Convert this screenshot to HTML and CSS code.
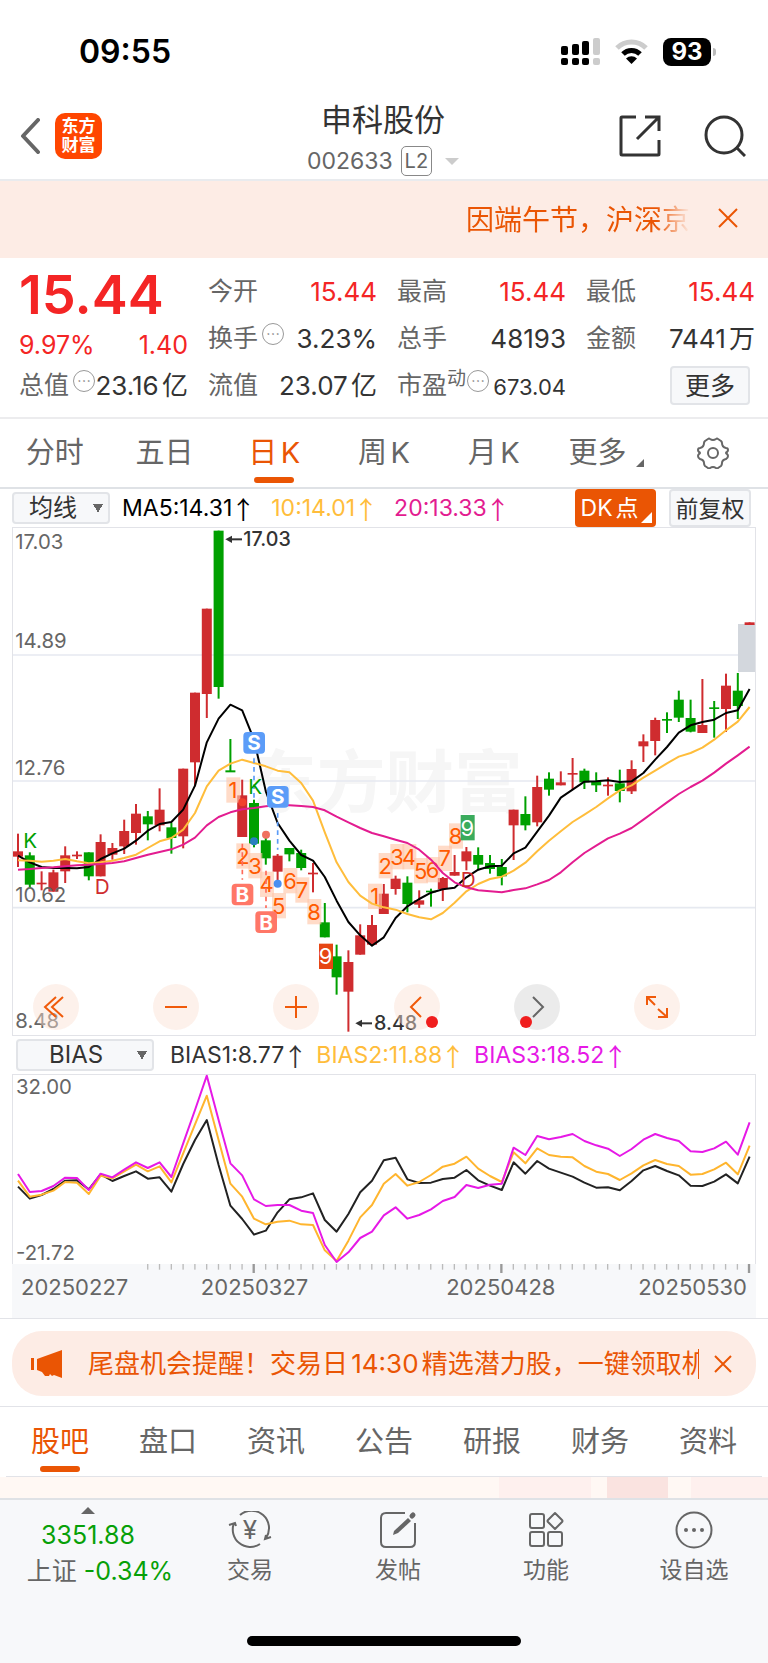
FILE: index.html
```html
<!DOCTYPE html>
<html lang="zh-CN">
<head>
    <meta charset="UTF-8">
    <title>申科股份 002633</title>
    <meta name="viewport" content="width=device-width, initial-scale=1">
    <link rel="stylesheet" href="styles.css">
</head>
<body>
    <div class="status-bar">
        <span class="clock">09:55</span>
        <div class="status-icons">
            <svg width="39" height="28" viewBox="0 0 39 28">
                <rect x="0" y="8" width="7" height="9" rx="2"/>
                <rect x="11" y="6" width="7" height="11" rx="2"/>
                <rect x="21" y="3" width="7" height="14" rx="2"/>
                <rect x="32" y="0" width="7" height="17" rx="2" fill="#ccc"/>
                <rect x="0" y="20" width="7" height="7" rx="2"/>
                <rect x="11" y="20" width="7" height="7" rx="2"/>
                <rect x="21" y="20" width="7" height="7" rx="2"/>
                <rect x="32" y="20" width="7" height="7" rx="2" fill="#ccc"/>
            </svg>
            <svg width="33" height="25" viewBox="0 0 33 25">
                <path d="M2 9a20.500 20.500 0 0 1 29 0" fill="none" stroke="#ccc" stroke-width="5"/>
                <path d="M8 15a12 12 0 0 1 17 0" fill="none" stroke="#000" stroke-width="5"/>
                <path d="M11 19.500a8 8 0 0 1 11 0L16.500 25z"/>
            </svg>
            <span class="battery">93</span>
        </div>
    </div>

    <header class="header">
        <div class="header-left">
            <button class="icon-button" aria-label="返回">
                <svg width="20" height="36" viewBox="0 0 20 36"><path d="M18 2 3 18l15 16" fill="none" stroke="#666" stroke-width="4" stroke-linecap="round" stroke-linejoin="round"/></svg>
            </button>
            <span class="logo">东方<br>财富</span>
        </div>
        <div class="header-title">
            <h1>申科股份</h1>
            <div class="stock-code">002633 <span class="level">L2</span> <i class="caret"></i></div>
        </div>
        <div class="header-right">
            <button class="icon-button" aria-label="分享">
                <svg width="42" height="42" viewBox="0 0 42 42" fill="none" stroke="#333" stroke-width="3"><path d="M17 2H3q-1 0-1 1v36q0 1 1 1h36q1 0 1-1V25M18 24 39 3M26 2h14v14"/></svg>
            </button>
            <button class="icon-button" aria-label="搜索">
                <svg width="42" height="42" viewBox="0 0 42 42" fill="none" stroke="#333" stroke-width="3"><circle cx="20" cy="20" r="18"/><path d="m32 32 9 9"/></svg>
            </button>
        </div>
    </header>

    <div class="notice">
        <p class="notice-text">因端午节，沪深京</p>
        <button class="icon-button close" aria-label="关闭">
            <svg width="20" height="20" viewBox="0 0 20 20"><path d="m1 1 18 18M19 1 1 19" stroke="#ea5504" stroke-width="2"/></svg>
        </button>
    </div>

    <section class="quote">
        <div class="quote-col">
            <div class="price">15.44</div>
            <div class="change"><span>9.97%</span><span>1.40</span></div>
            <div class="cell"><span>总值<i class="info">⋯</i></span><b>23.16亿</b></div>
        </div>
        <div class="quote-col">
            <div class="cell"><span>今开</span><b class="up">15.44</b></div>
            <div class="cell"><span>换手<i class="info">⋯</i></span><b>3.23%</b></div>
            <div class="cell"><span>流值</span><b>23.07亿</b></div>
        </div>
        <div class="quote-col">
            <div class="cell"><span>最高</span><b class="up">15.44</b></div>
            <div class="cell"><span>总手</span><b>48193</b></div>
            <div class="cell"><span>市盈<sup>动</sup><i class="info">⋯</i></span><b class="small">673.04</b></div>
        </div>
        <div class="quote-col">
            <div class="cell"><span>最低</span><b class="up">15.44</b></div>
            <div class="cell"><span>金额</span><b>7441万</b></div>
            <div class="cell cell-end"><button class="more">更多</button></div>
        </div>
    </section>

    <nav class="period-tabs">
        <a href="#">分时</a>
        <a href="#">五日</a>
        <a href="#" class="active">日K</a>
        <a href="#">周K</a>
        <a href="#">月K</a>
        <a href="#" class="with-corner">更多</a>
        <button class="icon-button" aria-label="设置">
            <svg width="32" height="32" viewBox="0 0 32 32" fill="none" stroke="#666" stroke-width="2">
                <circle cx="16" cy="16" r="5"/>
                <path stroke-linejoin="round" d="M11 2q1-1 2 0q3 2 6 0q1-1 2 0l3 2q1 1 1 2q0 4 4 5q2 0 2 2q0 1-1 2q-2 1 0 2q1 1 1 2q0 2-2 3q-4 1-4 4q0 2-1 3l-3 2q-1 1-2 0q-3-2-6 0q-1 1-2 0l-3-2q-1-1-1-3q0-3-4-4q-2-1-2-3q0-1 1-2q2-1 0-2q-1-1-1-2q0-2 2-2q4-1 4-5q0-1 1-2z"/>
            </svg>
        </button>
    </nav>

    <div class="indicator-row">
        <select class="picker" aria-label="主图指标"><option>均线</option></select>
        <span class="legend">MA5:14.31<i>↑</i></span>
        <span class="legend yellow">10:14.01<i>↑</i></span>
        <span class="legend pink">20:13.33<i>↑</i></span>
        <button class="dk">DK点</button>
        <button class="adjust">前复权</button>
    </div>

    <div class="main-chart">
        <svg id="candles" viewBox="36 22 2232 1527"></svg>
        <div class="chart-tools">
            <button class="tool" aria-label="最左"><svg viewBox="0 0 46 46"><path d="M23 13 12 23l11 10M30 13 19 23l11 10"/></svg></button>
            <button class="tool" aria-label="缩小"><svg viewBox="0 0 46 46"><path d="M12 23h22"/></svg></button>
            <button class="tool" aria-label="放大"><svg viewBox="0 0 46 46"><path d="M12 23h22M23 12v22"/></svg></button>
            <button class="tool dot-right" aria-label="左移"><svg viewBox="0 0 46 46"><path d="M27 13 17 23l10 10"/></svg></button>
            <button class="tool gray dot-left" aria-label="右移"><svg viewBox="0 0 46 46"><path d="m19 13 10 10-10 10"/></svg></button>
            <button class="tool" aria-label="全屏"><svg viewBox="0 0 46 46"><path d="m13 13 8 8M13 21v-8h9M24 25l9 8M33 24v9h-9"/></svg></button>
        </div>
    </div>

    <div class="indicator-row bias-row">
        <select class="picker wide" aria-label="副图指标"><option>BIAS</option></select>
        <span class="legend dark">BIAS1:8.77<i>↑</i></span>
        <span class="legend yellow">BIAS2:11.88<i>↑</i></span>
        <span class="legend purple">BIAS3:18.52<i>↑</i></span>
    </div>

    <div class="bias-chart">
        <svg id="bias" viewBox="36 132 2232 570"></svg>
    </div>
    <div class="dates">
        <svg id="ticks" viewBox="36 702 2232 28"></svg>
        <div class="date-labels">
            <span>20250227</span>
            <span>20250327</span>
            <span>20250428</span>
            <span>20250530</span>
        </div>
    </div>

    <div class="promo-wrap">
        <div class="promo">
            <svg width="32" height="28" viewBox="0 0 32 28" fill="#ea5504"><path d="M0 8h3v12H0zM6 9 31 0v28l-8-3-2 1-2-2-1 2h-4l-3-4-5-2z"/></svg>
            <p>尾盘机会提醒！交易日14:30精选潜力股，一键领取机</p>
            <button class="icon-button" aria-label="关闭">
                <svg width="18" height="18" viewBox="0 0 18 18"><path d="m1 1 16 16M17 1 1 17" stroke="#ea5504" stroke-width="2"/></svg>
            </button>
        </div>
    </div>

    <nav class="info-tabs">
        <a href="#" class="active">股吧</a>
        <a href="#">盘口</a>
        <a href="#">资讯</a>
        <a href="#">公告</a>
        <a href="#">研报</a>
        <a href="#">财务</a>
        <a href="#">资料</a>
    </nav>
    <div class="feed-strip"></div>

    <footer class="bottom-bar">
        <div class="bottom-items">
            <a href="#" class="index-item">
                <i class="caret-up"></i>
                <span class="down">3351.88</span>
                <span class="index-name">上证<em class="down">-0.34%</em></span>
            </a>
            <a href="#">
                <svg width="44" height="38" viewBox="0 0 44 38" fill="none" stroke="#666" stroke-width="2">
                    <path d="M12 4a17.500 17.500 0 0 1 26 23M32 33A17.500 17.500 0 0 1 6 12M1 14l6-2 1 3M43 26l-6 2 1-4"/>
                    <text x="22" y="28" text-anchor="middle" font-size="26" fill="#666" stroke="none">¥</text>
                </svg>
                <span>交易</span>
            </a>
            <a href="#">
                <svg width="38" height="38" viewBox="0 0 38 38" fill="none" stroke="#666" stroke-width="2">
                    <path d="M26 2H7q-5 0-5 5v24q0 5 5 5h24q5 0 5-5V12"/>
                    <path d="m14 24 1-4L29 7l3 3-13 12z" fill="#666" stroke="none"/>
                    <path d="m33 5 1-1" stroke-width="5" stroke-linecap="round"/>
                </svg>
                <span>发帖</span>
            </a>
            <a href="#">
                <svg width="36" height="36" viewBox="0 0 36 36" fill="none" stroke="#666" stroke-width="2">
                    <rect x="2" y="2" width="14" height="14" rx="2"/>
                    <rect x="2" y="20" width="14" height="14" rx="2"/>
                    <rect x="20" y="20" width="14" height="14" rx="2"/>
                    <path d="m27 1 7 7q1 1 0 2l-7 7-7-7q-1-1 0-2z" stroke-linejoin="round"/>
                </svg>
                <span>功能</span>
            </a>
            <a href="#">
                <svg width="38" height="38" viewBox="0 0 38 38" fill="#666">
                    <circle cx="19" cy="19" r="17.500" fill="none" stroke="#666" stroke-width="2"/>
                    <circle cx="11" cy="19" r="2"/><circle cx="19" cy="19" r="2"/><circle cx="27" cy="19" r="2"/>
                </svg>
                <span>设自选</span>
            </a>
        </div>
        <div class="home-bar"></div>
    </footer>

    <script src="chart.js"></script>
</body>
</html>
```
FILE: styles.css
```css
* {
    box-sizing: border-box;
}

body {
    margin: 0;
    background-color: #fff;
    color: #333;
    font-family: Inter, "Noto Sans CJK SC", sans-serif;
    font-size: 25px;
    text-autospace: normal;
}

h1, p {
    margin: 0;
    font-weight: 400;
}

a {
    color: #666;
    text-decoration: none;
}

i, em, b {
    font-style: normal;
    font-weight: 400;
}

svg {
    display: block;
}

button, select {
    font-family: inherit;
    color: #333;
    cursor: pointer;
    text-autospace: normal;
}

.icon-button {
    padding: 0;
    border: none;
    background: none;
}

.up {
    color: #f42525;
}

.down {
    color: #07a007;
}

/* status bar */
.status-bar {
    display: flex;
    justify-content: space-between;
    align-items: center;
    height: 95px;
    padding: 8px 57px 0 79px;
}

.clock {
    color: #000;
    font-size: 32px;
    font-weight: 600;
}

.status-icons {
    display: flex;
    align-items: center;
    gap: 15px;
}

.battery {
    position: relative;
    width: 48px;
    border-radius: 8px;
    background-color: #000;
    color: #fff;
    font-size: 24px;
    font-weight: 700;
    line-height: 28px;
    text-align: center;
}

.battery::after {
    content: "";
    position: absolute;
    left: 50px;
    top: 10px;
    width: 3px;
    height: 8px;
    border-radius: 0 3px 3px 0;
    background-color: #bbb;
}

/* header */
.header {
    display: grid;
    grid-template-columns: 1fr auto 1fr;
    align-items: center;
    height: 86px;
    padding: 0 22px 2px 20px;
    border-bottom: 2px solid #e9ebee;
}

.header-left {
    display: flex;
    align-items: center;
    gap: 15px;
}

.logo {
    width: 47px;
    padding: 4px 0;
    border-radius: 10px;
    background-color: #ff4600;
    color: #fff;
    font-size: 17px;
    font-weight: 700;
    line-height: 19px;
    text-align: center;
}

.header-title {
    margin: 4px 0 -4px;
    text-align: center;
}

.header-title h1 {
    font-size: 31px;
    line-height: 42px;
}

.stock-code {
    display: flex;
    align-items: center;
    gap: 8px;
    color: #666;
    font-size: 23px;
    line-height: 40px;
}

.level {
    padding: 0 3px;
    border: 1px solid #888;
    border-radius: 5px;
    font-size: 20px;
    line-height: 28px;
}

.caret {
    margin-left: 5px;
    border: 7px solid transparent;
    border-top-color: #ccc;
    border-bottom: none;
}

.header-right {
    display: flex;
    justify-content: flex-end;
    gap: 43px;
}

/* notice */
.notice {
    display: flex;
    justify-content: flex-end;
    align-items: center;
    gap: 28px;
    height: 77px;
    padding: 0 30px 3px 0;
    background-color: #fdece5;
}

.notice-text {
    color: #ea5504;
    font-size: 28px;
    -webkit-mask-image: linear-gradient(to right, #000 85%, transparent);
    mask-image: linear-gradient(to right, #000 85%, transparent);
}

/* quote */
.quote {
    display: grid;
    grid-template-columns: repeat(4, minmax(0, 1fr));
    gap: 20px;
    height: 161px;
    padding: 10px 13px 8px 19px;
    border-bottom: 2px solid #ececee;
}

.cell {
    display: flex;
    justify-content: space-between;
    height: 47px;
    line-height: 47px;
    white-space: nowrap;
}

.cell span {
    color: #666;
}

.cell b {
    font-size: 26px;
}

.cell sup {
    font-size: 19px;
    line-height: 19px;
}

.cell .small {
    font-size: 22px;
    line-height: 51px;
}

.cell-end {
    justify-content: flex-end;
    align-items: center;
    padding-right: 5px;
}

.info {
    display: inline-block;
    width: 22px;
    height: 22px;
    margin-left: 4px;
    border: 1px solid #999;
    border-radius: 50%;
    color: #888;
    font-size: 14px;
    line-height: 20px;
    text-align: center;
    vertical-align: 8px;
}

sup + .info {
    margin-left: 1px;
}

.price {
    height: 54px;
    color: #f42525;
    font-size: 54px;
    font-weight: 600;
    line-height: 54px;
}

.change {
    display: flex;
    justify-content: space-between;
    height: 40px;
    color: #f42525;
    line-height: 46px;
}

.more {
    width: 80px;
    height: 39px;
    padding: 0;
    border: 2px solid #e2e4e8;
    border-radius: 4px;
    background-color: #f7f8fa;
    font-size: 25px;
    line-height: 34px;
}

/* period tabs */
.period-tabs {
    display: flex;
    align-items: center;
    height: 70px;
    border-bottom: 2px solid #dfe2e6;
    font-size: 29px;
    line-height: 68px;
}

.period-tabs a,
.period-tabs button,
.info-tabs a {
    position: relative;
    flex: 1;
    text-align: center;
}

.period-tabs svg {
    margin: 0 auto;
}

.period-tabs .active,
.info-tabs .active {
    color: #ea5504;
}

.period-tabs .active::after,
.info-tabs .active::after {
    content: "";
    position: absolute;
    left: 50%;
    bottom: 4px;
    width: 40px;
    height: 6px;
    margin-left: -20px;
    border-radius: 3px;
    background-color: #ea5504;
}

.with-corner {
    text-indent: -12px;
}

.with-corner::after {
    content: "";
    position: absolute;
    right: 14px;
    bottom: 20px;
    border-left: 8px solid transparent;
    border-bottom: 8px solid #666;
}

/* indicators */
.indicator-row {
    display: flex;
    align-items: center;
    height: 38px;
    padding: 0 17px 0 12px;
    font-size: 23px;
    white-space: nowrap;
}

.picker {
    width: 98px;
    height: 32px;
    margin-right: 12px;
    padding: 0 28px 0 15px;
    border: 2px solid #e2e4e8;
    border-radius: 4px;
    appearance: none;
    background: #f7f8fa conic-gradient(from 331deg at 50% 100%, #666 58deg, transparent 0) no-repeat right 5px center / 10px 9px;
    font-size: 24px;
    line-height: 26px;
}

.wide {
    width: 138px;
    margin-right: 16px;
    padding-left: 31px;
}

.legend {
    display: flex;
    align-items: center;
    margin-right: 20px;
    color: #000;
}

.legend i {
    display: flex;
    justify-content: center;
    width: 16px;
    margin-left: 3px;
    font-family: "Noto Sans CJK SC", sans-serif;
    font-size: 25px;
    line-height: 26px;
}

.bias-row .legend {
    margin-right: 13px;
}

.legend.dark {
    color: #333;
}

.legend.yellow {
    color: #ffbd3b;
}

.legend.pink {
    color: #e31c90;
}

.legend.purple {
    color: #e619e6;
}

.dk,
.adjust {
    height: 38px;
    padding: 0;
    border: none;
    border-radius: 4px;
    font-size: 23px;
    line-height: 36px;
}

.dk {
    position: relative;
    width: 81px;
    margin-left: auto;
    padding-right: 12px;
    background-color: #ea5504;
    color: #fff;
}

.dk::after {
    content: "";
    position: absolute;
    right: 4px;
    bottom: 4px;
    border-left: 11px solid transparent;
    border-bottom: 11px solid #fff;
}

.adjust {
    width: 82px;
    margin-left: 13px;
    border: 2px solid #e2e4e8;
    background-color: #f7f8fa;
}

/* charts */
.main-chart {
    position: relative;
    margin: 0 12px;
    outline: 1px solid #e2e3e8;
    outline-offset: -1px;
}

.chart-tools {
    position: absolute;
    left: 21px;
    right: 76px;
    bottom: 6px;
    display: flex;
    justify-content: space-between;
}

.tool {
    position: relative;
    width: 46px;
    height: 46px;
    padding: 0;
    border: none;
    border-radius: 50%;
    background-color: rgba(251, 224, 211, 0.45);
}

.tool path {
    fill: none;
    stroke: #f05a0a;
    stroke-width: 2;
}

.gray {
    background-color: rgba(0, 0, 0, 0.08);
}

.gray path {
    stroke: #666;
}

.dot-right::after,
.dot-left::after {
    content: "";
    position: absolute;
    bottom: 2px;
    width: 12px;
    height: 12px;
    border-radius: 50%;
    background-color: #f01e1e;
}

.dot-right::after {
    right: 2px;
}

.dot-left::after {
    left: 6px;
}

.bias-row {
    padding-left: 16px;
}

.bias-chart {
    margin: 0 12px;
    box-shadow: inset 1px 1px #e2e3e8, inset -1px 0 #e2e3e8;
}

.dates {
    height: 54px;
    margin: 0 12px;
    background-color: #f7f8fa;
}

.date-labels {
    display: flex;
    padding: 0 9px;
    color: #666;
    font-size: 22px;
    line-height: 28px;
}

.date-labels span:nth-child(2) {
    margin-left: 10%;
}

.date-labels span:nth-child(3) {
    margin-left: 19%;
}

.date-labels span:nth-child(4) {
    margin-left: auto;
}

/* promo */
.promo-wrap {
    padding: 12px 12px 10px;
    border-top: 1px solid #e2e3e8;
    border-bottom: 1px solid #e2e3e8;
}

.promo {
    display: flex;
    align-items: center;
    height: 65px;
    padding: 0 24px 0 19px;
    border-radius: 30px;
    background-color: #fdece5;
}

.promo p {
    flex: 1;
    margin: 0 15px 0 25px;
    border-right: 1px solid #ea5504;
    overflow: hidden;
    color: #ea5504;
    font-size: 26px;
    line-height: 30px;
    white-space: nowrap;
}

/* info tabs */
.info-tabs {
    display: flex;
    margin: 0 6px;
    border-bottom: 1px solid #e2e3e8;
    font-size: 29px;
    line-height: 69px;
}

.feed-strip {
    height: 21px;
    background: linear-gradient(to right, #fff8f4 65%, #fef0ee 65% 77%, #fff8f4 77% 79%, #fae3e0 79% 87%, #fff8f4 87% 90%, #fef0ee 90%);
}

/* bottom bar */
.bottom-bar {
    padding-bottom: 18px;
    border-top: 2px solid #dfe2e6;
    background-color: #f7f8fa;
}

.bottom-items {
    display: flex;
    height: 136px;
}

.bottom-items a {
    display: flex;
    flex: 1;
    flex-direction: column;
    align-items: center;
    padding-top: 11px;
    font-size: 23px;
    line-height: 32px;
}

.bottom-items svg {
    height: 38px;
    margin-bottom: 5px;
}

.bottom-items .index-item {
    flex: 0 0 176px;
    padding-top: 7px;
    font-size: 25px;
}

.index-item span {
    margin-top: 7px;
    line-height: 29px;
    white-space: nowrap;
}

.index-item .index-name {
    margin-left: 24px;
}

.index-item em {
    margin-left: 7px;
}

.caret-up {
    border: 7px solid transparent;
    border-bottom-color: #666;
    border-top: none;
}

.home-bar {
    width: 274px;
    height: 10px;
    margin: 0 auto;
    border-radius: 5px;
    background-color: #000;
}

/* chart drawing */
#candles text,
#bias text {
    font-size: 61px;
    fill: #666;
}

.grid-line {
    stroke: #e6e9f0;
    stroke-width: 5;
}

.line {
    fill: none;
    stroke-width: 6;
    stroke-linejoin: round;
}

#candles .watermark {
    font-size: 206px;
    font-weight: 700;
    fill: #f6f6f6;
}

#candles .count {
    font-size: 66px;
    fill: #ff5a00;
    text-anchor: middle;
}

#candles .count.on {
    fill: #fff;
}

#candles .badge {
    font-size: 62px;
    font-weight: 700;
    fill: #fff;
    text-anchor: middle;
}

#candles .green {
    font-size: 62px;
    fill: #00a000;
}

#candles .red {
    font-size: 62px;
    fill: #cf2c2f;
}

#candles .peak {
    fill: #333;
    font-weight: 500;
    font-size: 59px;
}
```
FILE: chart.js
```js
const RED = "#cf2c2f";
const GREEN = "#00a000";
const STEP = 35.4;
const X0 = 54;

// [up, wickTop, wickBottom, bodyTop, bodyBottom]
const candles = [
    [1, 942, 1042, 995, 1011], [0, 998, 1105, 1007, 1095], [1, 1055, 1112, 1089, 1093],
    [1, 1050, 1116, 1058, 1116], [1, 980, 1090, 1007, 1055], [1, 995, 1018, 1005, 1009],
    [0, 998, 1082, 998, 1070], [1, 944, 1070, 967, 1070], [1, 970, 1020, 985, 1005],
    [1, 900, 1003, 934, 980], [1, 853, 975, 882, 940], [0, 874, 962, 890, 914],
    [1, 806, 935, 870, 917], [0, 910, 1002, 923, 955], [1, 747, 986, 747, 950],
    [1, 519, 800, 519, 728], [1, 267, 595, 267, 523], [0, 33, 537, 33, 502],
    [0, 658, 755, 752, 758], [1, 780, 952, 827, 952], [0, 840, 983, 850, 972],
    [0, 945, 1035, 962, 1016], [1, 1003, 1085, 1008, 1056], [0, 985, 1025, 985, 1004],
    [0, 990, 1052, 1000, 1045], [1, 1030, 1118, 1059, 1063], [0, 1150, 1253, 1208, 1253],
    [0, 1275, 1425, 1310, 1373], [1, 1292, 1536, 1327, 1416], [1, 1214, 1305, 1247, 1305],
    [1, 1186, 1277, 1216, 1275], [1, 1093, 1183, 1122, 1183], [1, 1068, 1125, 1077, 1108],
    [0, 1070, 1178, 1089, 1153], [1, 1112, 1165, 1142, 1155], [0, 1107, 1161, 1113, 1117],
    [1, 1072, 1144, 1075, 1108], [1, 1006, 1068, 1057, 1068], [1, 982, 1052, 995, 1025],
    [0, 983, 1052, 1006, 1035], [0, 1006, 1062, 1030, 1048], [0, 1018, 1097, 1042, 1070],
    [1, 870, 1021, 870, 917], [0, 830, 932, 883, 917], [1, 768, 920, 802, 908],
    [0, 758, 828, 777, 810], [1, 755, 797, 788, 797], [1, 715, 810, 760, 764],
    [0, 747, 808, 753, 788], [0, 758, 817, 785, 797], [1, 773, 828, 795, 799],
    [0, 750, 848, 791, 814], [1, 722, 823, 748, 815], [1, 644, 727, 665, 680],
    [1, 594, 707, 601, 664], [0, 578, 640, 598, 603], [0, 513, 607, 540, 594],
    [0, 540, 638, 595, 636], [1, 478, 640, 616, 640], [0, 544, 654, 563, 568],
    [1, 462, 637, 498, 568], [0, 460, 598, 513, 559], [1, 308, 316, 308, 316]
];

const ma5 = [1008, 1028, 1042, 1045, 1045, 1046, 1042, 1018, 1001, 987, 963, 933, 913, 907, 870, 798, 668, 597, 555, 572, 660, 815, 910, 963, 1006, 1023, 1072, 1143, 1207, 1247, 1278, 1253, 1195, 1160, 1138, 1119, 1109, 1104, 1073, 1050, 1040, 1038, 1001, 984, 936, 888, 834, 810, 786, 785, 782, 787, 785, 760, 720, 682, 639, 617, 607, 600, 580, 572, 508];
const ma10 = [1022, 1023, 1026, 1023, 1018, 1025, 1031, 1028, 1023, 1015, 1005, 985, 965, 955, 930, 880, 800, 753, 732, 720, 730, 740, 753, 758, 790, 843, 938, 1028, 1087, 1128, 1152, 1163, 1170, 1183, 1193, 1199, 1180, 1149, 1115, 1093, 1078, 1071, 1053, 1029, 995, 963, 935, 907, 885, 862, 836, 812, 797, 774, 753, 731, 711, 700, 684, 660, 632, 606, 562];
const ma20 = [1050, 1048, 1045, 1043, 1040, 1037, 1035, 1033, 1030, 1025, 1015, 1005, 997, 989, 975, 954, 917, 892, 878, 869, 865, 860, 857, 857, 859, 862, 872, 891, 908, 925, 940, 950, 960, 970, 990, 1020, 1060, 1088, 1103, 1112, 1115, 1118, 1111, 1106, 1094, 1081, 1058, 1028, 1000, 978, 956, 942, 925, 900, 874, 848, 823, 802, 783, 759, 732, 707, 681];

const bias1 = [470, 506, 495, 477, 452, 451, 478, 433, 453, 438, 424, 446, 442, 485, 402, 330, 270, 405, 527, 567, 614, 602, 547, 508, 502, 490, 570, 605, 552, 487, 452, 391, 383, 448, 459, 458, 447, 443, 420, 451, 467, 480, 397, 431, 393, 416, 428, 440, 458, 473, 472, 481, 453, 421, 408, 423, 436, 467, 468, 455, 433, 460, 380];
const bias2 = [452, 500, 494, 482, 456, 458, 492, 437, 445, 424, 404, 424, 409, 457, 370, 283, 197, 330, 461, 500, 566, 583, 575, 572, 583, 585, 661, 693, 632, 562, 525, 461, 432, 467, 456, 435, 410, 401, 380, 416, 438, 456, 367, 400, 355, 375, 380, 382, 408, 425, 432, 450, 430, 406, 390, 402, 408, 434, 432, 418, 398, 433, 347];
const bias3 = [432, 486, 483, 468, 443, 444, 480, 431, 442, 419, 397, 414, 397, 441, 340, 240, 137, 270, 400, 436, 508, 528, 525, 525, 542, 549, 645, 696, 667, 624, 605, 556, 532, 566, 555, 538, 513, 501, 465, 474, 464, 461, 353, 375, 318, 328, 321, 312, 333, 346, 356, 378, 357, 329, 312, 324, 333, 364, 366, 355, 335, 374, 277];

// [text, x, y, background]
const counts = [
    ["1", 679, 773], ["2", 709, 971], ["3", 745, 1000], ["4", 780, 1056], ["5", 816, 1120],
    ["6", 850, 1045], ["7", 886, 1073], ["8", 922, 1138], ["9", 957, 1272, "#e64614"],
    ["1", 1104, 1092], ["2", 1136, 1000], ["3", 1171, 973], ["4", 1207, 973], ["5", 1242, 1015],
    ["6", 1278, 1012], ["7", 1314, 978], ["8", 1347, 911], ["9", 1382, 886, "#3aab5c"]
];

function x(i) {
    return X0 + i * STEP;
}

function rect(left, top, width, height, fill, rx = 0) {
    return `<rect x="${left}" y="${top}" width="${width}" height="${height}" fill="${fill}" rx="${rx}"/>`;
}

function line(values, color) {
    const points = values.map((v, i) => `${x(i).toFixed(1)},${v}`).join(" ");
    return `<polyline class="line" points="${points}" stroke="${color}"/>`;
}

function text(left, top, value, cls = "") {
    return `<text x="${left}" y="${top}" class="${cls}">${value}</text>`;
}

function dash(left, top, bottom, color) {
    return `<path d="M${left} ${top}V${bottom}" stroke="${color}" stroke-width="5" stroke-dasharray="14 12"/>`;
}

function badge(left, top, value, color) {
    return rect(left - 32, top - 33, 65, 65, color, 12) + text(left, top + 22, value, "badge");
}

function dot(left, top, color) {
    return `<circle cx="${left}" cy="${top}" r="12" fill="${color}"/>`;
}

function arrow(left, top) {
    return `<path d="M${left + 14} ${top}h36" stroke="#333" stroke-width="6"/><path d="M${left} ${top}l20-11v22z" fill="#333"/>`;
}

function drawCandles() {
    let out = text(744, 862, "东方财富", "watermark");
    [406, 784, 1164].forEach(y => {
        out += `<path class="grid-line" d="M36 ${y}H2268"/>`;
    });
    out += rect(2214, 313, 54, 144, "#d3d7dd");
    candles.forEach(([up, top, bottom, bodyTop, bodyBottom], i) => {
        const color = up ? RED : GREEN;
        out += rect(x(i) - 3, top, 6, bottom - top, color);
        out += rect(x(i) - 15, bodyTop, 30, Math.max(bodyBottom - bodyTop, 5), color);
    });
    counts.forEach(([n, left, top, bg]) => {
        out += rect(left, top, 42, 76, bg || "rgba(255, 200, 170, 0.65)");
        out += text(left + 20, top + 62, n, bg ? "count on" : "count");
    });
    out += line(ma5, "#000") + line(ma10, "#ffbd3b") + line(ma20, "#e31c90");
    out += dash(762, 716, 840, "#5b9cf8") + dash(833, 880, 990, "#5b9cf8");
    out += dash(727, 972, 1080, "#ff6a5a") + dash(798, 1053, 1165, "#ff6a5a");
    out += dot(727, 848, "#f2402c") + dot(762, 965, "#2a7fc0") + dot(798, 945, "#f0705f") + dot(833, 1092, "#4a8ff0");
    out += badge(762, 670, "S", "#5b9cf8") + badge(833, 832, "S", "#5b9cf8");
    out += badge(727, 1125, "B", "#ff7767") + badge(798, 1208, "B", "#ff7767");
    out += text(70, 985, "K", "green") + text(745, 823, "K", "green");
    out += text(284, 1122, "D", "red") + text(1382, 1103, "D", "red");
    out += text(46, 87, "17.03") + text(46, 386, "14.89") + text(46, 766, "12.76") + text(46, 1147, "10.62") + text(46, 1526, "8.48");
    out += arrow(676, 59) + text(730, 80, "17.03", "peak");
    out += arrow(1066, 1511) + text(1122, 1532, "8.48", "peak");
    document.getElementById("candles").innerHTML = out;
}

function drawBias() {
    document.getElementById("bias").innerHTML =
        line(bias1, "#222") + line(bias2, "#ffb52e") + line(bias3, "#e619e6") +
        text(48, 192, "32.00") + text(48, 689, "-21.72");
}

function drawTicks() {
    let out = "";
    for (let i = 11; i <= 62; i++) {
        const major = i === 20 || i === 41 || i === 62;
        out += rect(x(i) - (major ? 4 : 2), 702, major ? 7 : 4, major ? 28 : 17, major ? "#999" : "#bbb");
    }
    document.getElementById("ticks").innerHTML = out;
}

drawCandles();
drawBias();
drawTicks();
```
